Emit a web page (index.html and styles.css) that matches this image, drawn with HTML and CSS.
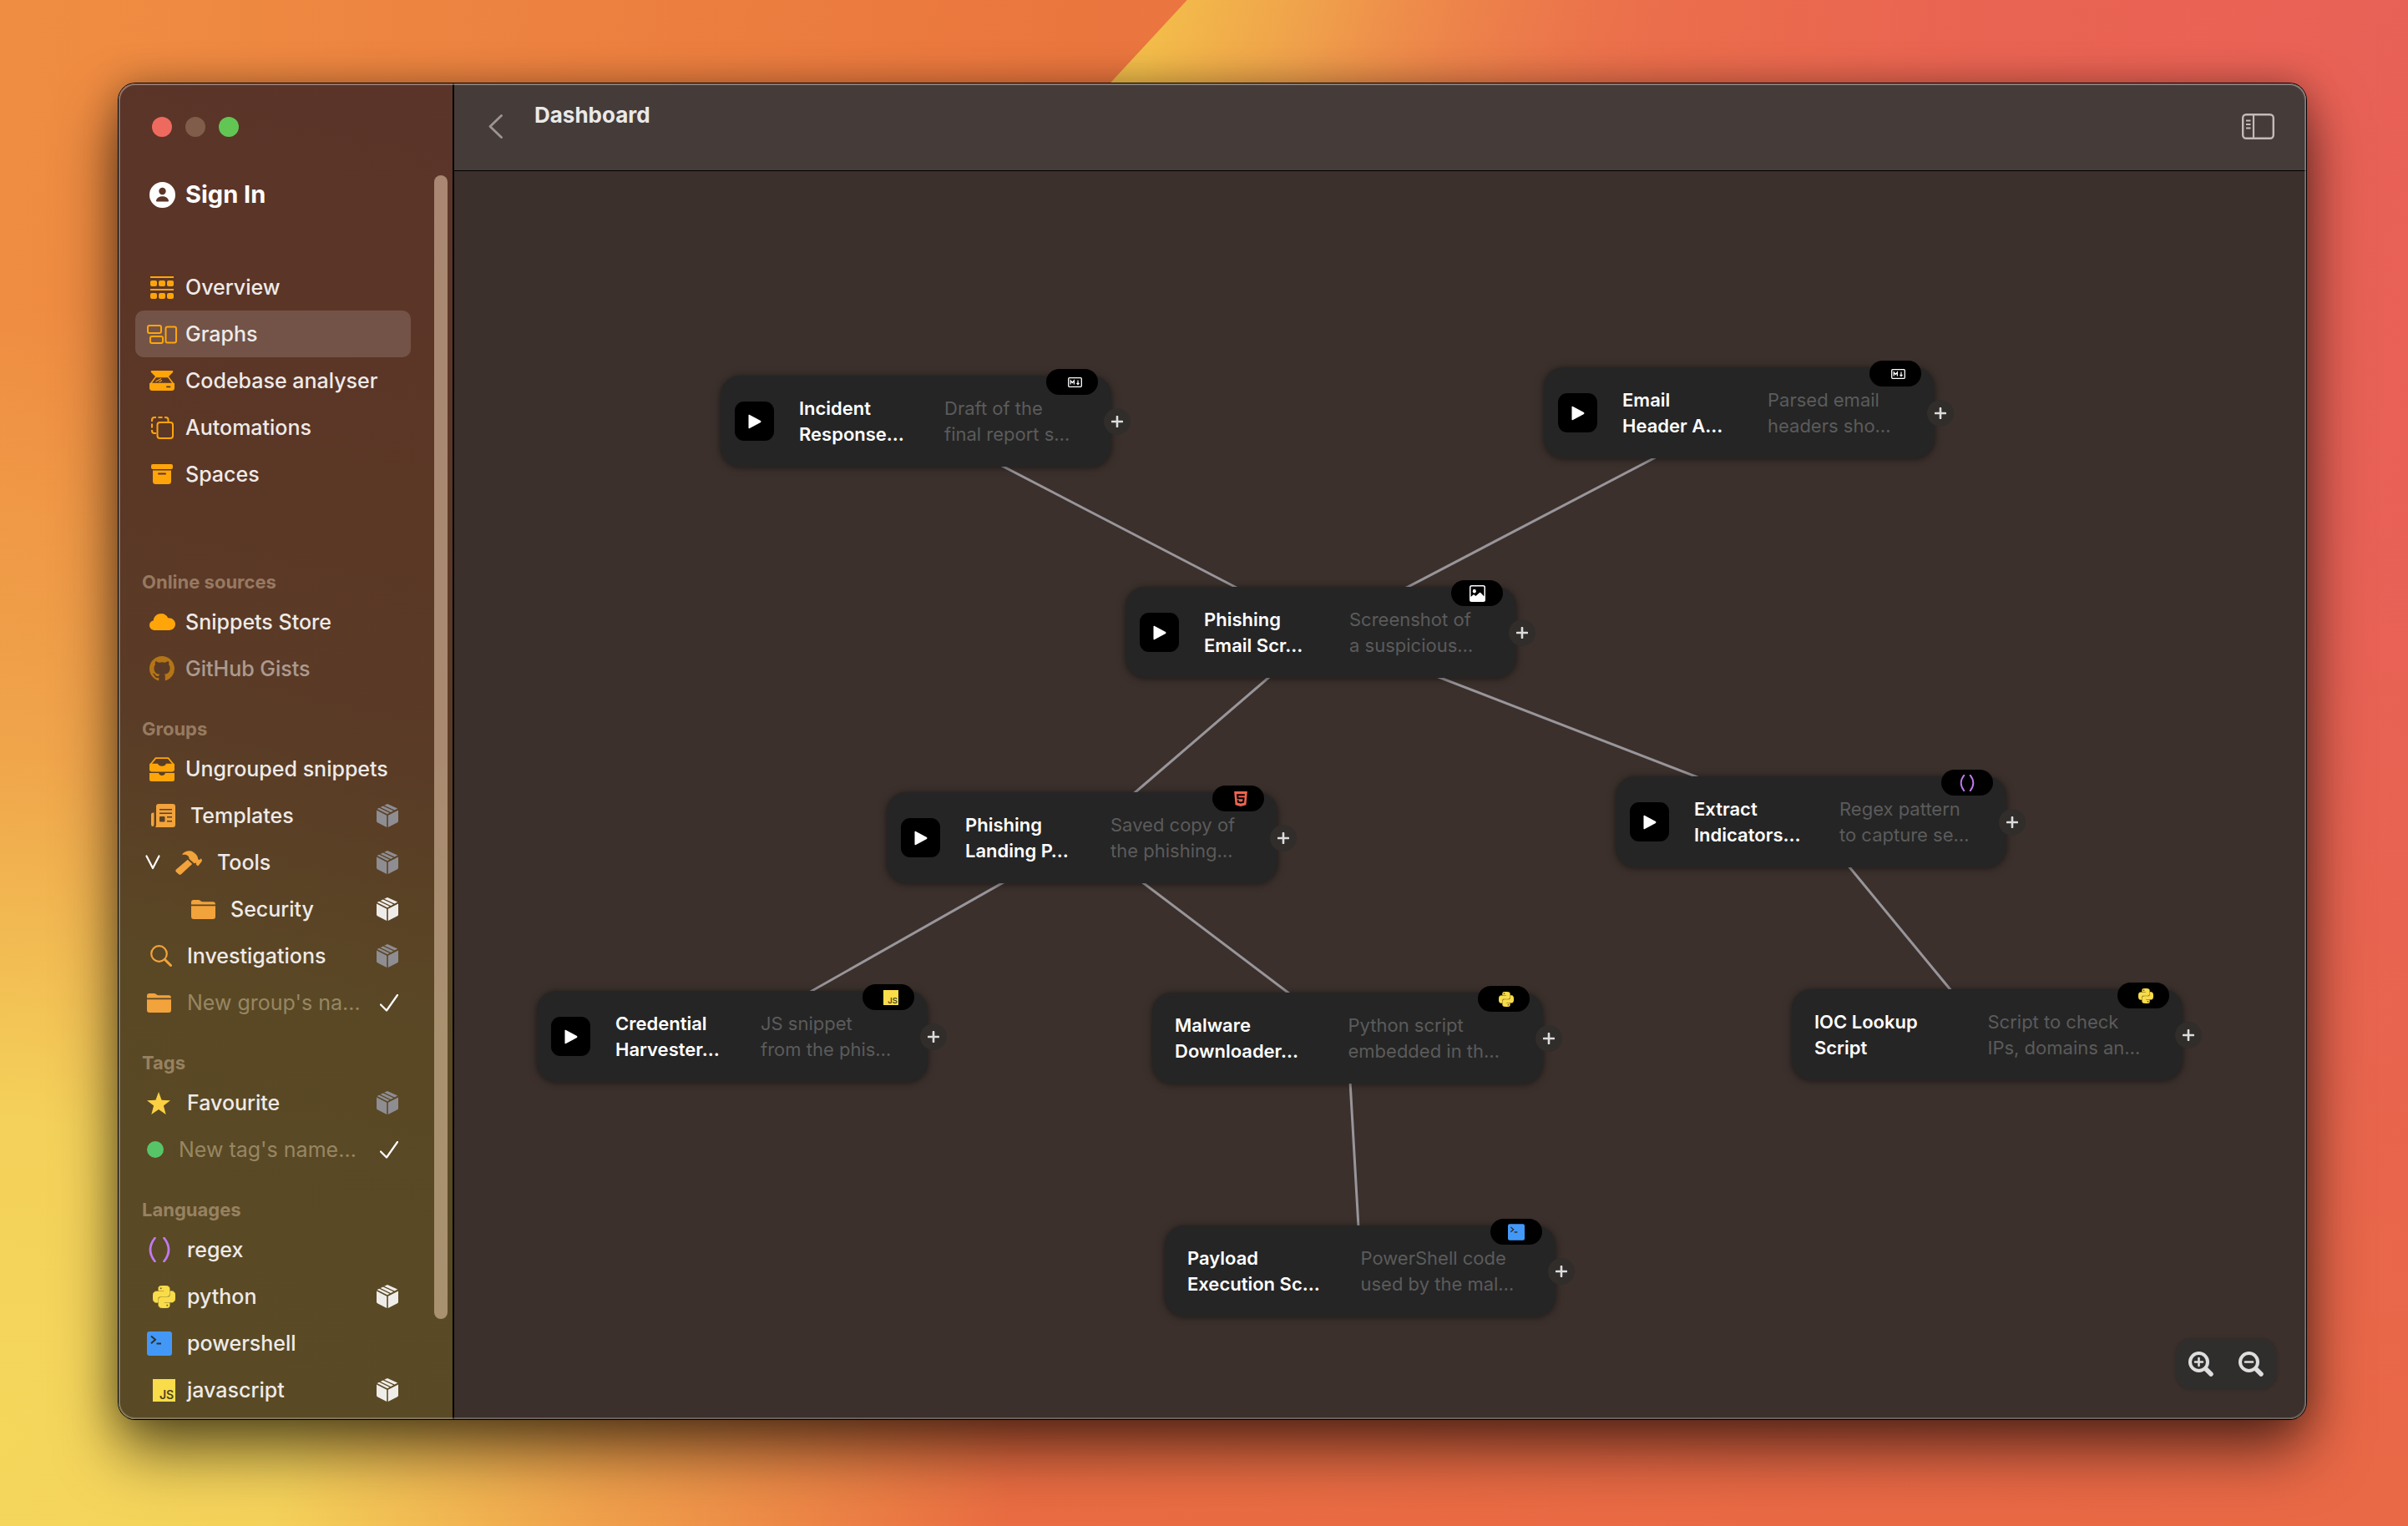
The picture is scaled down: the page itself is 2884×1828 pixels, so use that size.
FILE: index.html
```html
<!DOCTYPE html>
<html lang="en">
<head>
<meta charset="utf-8">
<meta name="viewport" content="width=device-width, initial-scale=1">
<title>Dashboard</title>
<link rel="stylesheet" href="styles.css">
</head>
<body>
<svg class="symbols" width="0" height="0" aria-hidden="true">
  <symbol id="cube" viewBox="0 0 26 28">
    <path d="M13 0L25.2 5.6 21.6 7.5 9.2 1.8Z"/><path d="M7.8 2.5L20.2 8.3 17 10 4.6 4.1Z"/><path d="M3.2 4.8L15.6 10.8 13 12.2 .6 6Z"/>
    <path d="M0 7.4L12.2 13.8V28L1 22.3Q0 21.8 0 20.6Z"/><path d="M26 7.4L13.8 13.8V28L25 22.3Q26 21.8 26 20.6Z"/>
  </symbol>
  <symbol id="check" viewBox="0 0 22 21"><path d="M1 12.5L8 19.5 21 1" fill="none" stroke="currentColor" stroke-width="2.2" stroke-linecap="round" stroke-linejoin="round"/></symbol>
  <symbol id="folder" viewBox="0 0 29 23"><path d="M0 5.6V3Q0 0 3 0H8.500Q10 0 11 1L12 1.800Q12.600 2.200 13.600 2.200H26Q29 2.200 29 5.600Z"/><path d="M0 7.200H29V20Q29 23 26 23H3Q0 23 0 20Z"/></symbol>
  <symbol id="play" viewBox="0 0 16 18"><path d="M1.500 .8L15 8Q16 9 15 10L1.500 17.200Q.5 17.600 .5 16.500V1.500Q.5 .4 1.500 .8Z"/></symbol>
  <symbol id="plus" viewBox="0 0 14 14"><path d="M7 1V13M1 7H13" fill="none" stroke="currentColor" stroke-width="2.600" stroke-linecap="round"/></symbol>
  <symbol id="parens" viewBox="0 0 26 30"><path d="M7.500 1Q-3.500 15 7.500 29M18.500 1Q29.500 15 18.500 29" fill="none" stroke="currentColor" stroke-width="2.800" stroke-linecap="round"/></symbol>
  <symbol id="python" viewBox="0 0 24 24"><path stroke="currentColor" stroke-width=".7" d="M14.25.18l.9.2.73.26.59.3.45.32.34.34.25.34.16.33.1.3.04.26.02.2-.01.13V8.500l-.05.63-.13.55-.21.46-.26.38-.3.31-.33.25-.35.19-.35.14-.33.1-.3.07-.26.04-.21.02H8.770l-.69.05-.59.14-.5.22-.41.27-.33.32-.27.35-.2.36-.15.37-.1.35-.07.32-.04.27-.02.21v3.060H3.170l-.21-.03-.28-.07-.32-.12-.35-.18-.36-.26-.36-.36-.35-.46-.32-.59-.28-.73-.21-.88-.14-1.050-.05-1.230.06-1.220.16-1.040.24-.87.32-.71.36-.57.4-.44.42-.33.42-.24.4-.16.36-.1.32-.05.24-.01h.16l.06.01h8.160v-.83H6.180l-.01-2.750-.02-.37.05-.34.11-.31.17-.28.25-.26.31-.23.38-.2.44-.18.51-.15.58-.12.64-.1.71-.06.77-.04.84-.02 1.270.05zm-6.300 1.980l-.23.33-.08.41.08.41.23.34.33.22.41.09.41-.09.33-.22.23-.34.08-.41-.08-.41-.23-.33-.33-.22-.41-.09-.41.09zm13.090 3.950l.28.06.32.12.35.18.36.27.36.35.35.47.32.59.28.73.21.88.14 1.040.05 1.230-.06 1.230-.16 1.040-.24.86-.32.71-.36.57-.4.45-.42.33-.42.24-.4.16-.36.09-.32.05-.24.02-.16-.01h-8.220v.82h5.840l.01 2.760.02.36-.05.34-.11.31-.17.29-.25.25-.31.24-.38.2-.44.17-.51.15-.58.13-.64.09-.71.07-.77.04-.84.01-1.270-.04-1.070-.14-.9-.2-.73-.25-.59-.3-.45-.33-.34-.34-.25-.34-.16-.33-.1-.3-.04-.25-.02-.2.01-.13v-5.340l.05-.64.13-.54.21-.46.26-.38.3-.32.33-.24.35-.2.35-.14.33-.1.3-.06.26-.04.21-.02.13-.01h5.840l.69-.05.59-.14.5-.21.41-.28.33-.32.27-.35.2-.36.15-.36.1-.35.07-.32.04-.28.02-.21V6.070h2.090l.14.01zm-6.470 14.250l-.23.33-.08.41.08.41.23.33.33.23.41.08.41-.08.33-.23.23-.33.08-.41-.08-.41-.23-.33-.33-.23-.41-.08-.41.08z"/></symbol>
  <symbol id="powershell" viewBox="0 0 30 29"><rect width="30" height="29" rx="3"/><path d="M5 5.500L10 9.800 5 14.200M11.500 14.500H17" fill="none" stroke="#2a3330" stroke-width="2"/></symbol>
  <symbol id="markdown" viewBox="0 0 17 12"><rect x=".7" y=".7" width="15.600" height="10.600" rx="1" fill="none" stroke="currentColor" stroke-width="1.300"/><path d="M3.200 8.500V4L5.300 6.500 7.400 4V8.500M12 3.500V8M10.500 6.800L12 8.500 13.500 6.800" fill="none" stroke="currentColor" stroke-width="1.200"/></symbol>
  <symbol id="photo" viewBox="0 0 19 20"><path fill-rule="evenodd" d="M2.500 0H16.500Q19 0 19 2.500V17.500Q19 20 16.500 20H2.500Q0 20 0 17.500V2.500Q0 0 2.500 0ZM1.500 14L4.500 11.500Q5 11 5.600 11.500L7.500 13 12 9Q12.600 8.500 13.200 9L17.500 13.500V2.700Q17.500 1.500 16.300 1.500H2.700Q1.500 1.500 1.500 2.700Z"/><ellipse cx="5.800" cy="7.200" rx="2" ry="2.400"/></symbol>
  <symbol id="html5" viewBox="0 0 24 24"><path d="M1.500 0h21l-1.910 21.563L11.977 24l-8.564-2.438L1.500 0zm7.031 9.750l-.232-2.718 10.059.003.23-2.622L5.412 4.410l.698 8.010h9.126l-.326 3.426-2.910.804-2.955-.81-.188-2.110H6.248l.33 4.171L12 19.351l5.379-1.443.744-8.157H8.531z"/></symbol>
</svg>

<svg class="wallpaper" viewBox="0 0 1568 994" preserveAspectRatio="none" aria-hidden="true">
  <defs>
    <linearGradient id="wave" gradientUnits="userSpaceOnUse" x1="748" y1="27" x2="1060" y2="120">
      <stop offset="0" stop-color="#f3bd4a"/><stop offset=".3" stop-color="#f0a54c" stop-opacity=".9"/><stop offset="1" stop-color="#ec7850" stop-opacity="0"/>
    </linearGradient>
  </defs>
  <path d="M773 0H1200V400H403Z" fill="url(#wave)"/>
</svg>

<div class="window">
  <aside class="sidebar">
    <div class="lights">
      <button class="light close" aria-label="Close"></button>
      <button class="light minimise" aria-label="Minimise"></button>
      <button class="light zoom" aria-label="Zoom"></button>
    </div>

    <a class="row account" href="#">
      <span class="slot"><svg width="31" height="31" viewBox="0 0 31 31"><path fill-rule="evenodd" d="M15.500 0A15.500 15.500 0 1 1 15.500 31 15.500 15.500 0 1 1 15.500 0ZM15.500 6.800A4.200 4.200 0 1 0 15.500 15.200 4.200 4.200 0 1 0 15.500 6.800ZM8 22.500Q8 23.500 9 23.500H22Q23 23.500 23 22.500C22 15.600 9 15.600 8 22.500Z"/></svg></span>Sign In
    </a>

    <nav class="menu">
      <a class="row" href="#"><span class="slot"><svg width="28" height="27" viewBox="0 0 28 27"><path d="M0 0H28V2H0ZM0 15H28V17H0Z"/><rect y="5" width="8" height="7" rx="2"/><rect x="10" y="5" width="8" height="7" rx="2"/><rect x="20" y="5" width="8" height="7" rx="2"/><rect y="20" width="8" height="7" rx="2"/><rect x="10" y="20" width="8" height="7" rx="2"/><rect x="20" y="20" width="8" height="7" rx="2"/></svg></span>Overview</a>
      <a class="row selected" href="#" aria-current="page"><span class="slot"><svg width="36" height="23" viewBox="0 0 36 23"><g fill="none" stroke="currentColor" stroke-width="2"><rect x="1" y="1" width="16" height="9" rx="2"/><rect x="4" y="14" width="15" height="8" rx="2"/><rect x="22.500" y="2.500" width="12.500" height="19" rx="2"/></g></svg></span>Graphs</a>
      <a class="row" href="#"><span class="slot"><svg width="30" height="24" viewBox="0 0 30 24"><path d="M2.500 0H27.500Q29 .5 28 2L23 7H7L2 2Q1 .5 2.500 0Z"/><path d="M7.500 7.500H22.500L28.500 15.500H1.500Z" fill="none" stroke="currentColor" stroke-width="1.600"/><path d="M7.500 13L14 9.500M11.500 13.500L15 11.500" fill="none" stroke="currentColor" stroke-width="1.200"/><path fill-rule="evenodd" d="M0 15H30V20.500Q30 24 26.500 24H3.500Q0 24 0 20.500ZM21 18.600Q20 18.600 20 19.500 20 20.300 21 20.300H24.500Q25.500 20.300 25.500 19.500 25.500 18.600 24.500 18.600Z"/></svg></span>Codebase analyser</a>
      <a class="row" href="#"><span class="slot"><svg width="27" height="27" viewBox="0 0 27 27"><g fill="none" stroke="currentColor" stroke-width="2"><rect x="7.500" y="7" width="18.500" height="19" rx="3"/><path d="M1 6V4Q1 1 4 1H6M8.500 1H13.500M16 1H17.500Q20.500 1 20.500 4V6M1 8.500V13.500M1 16V17Q1 20 4 20H6"/></g></svg></span>Automations</a>
      <a class="row" href="#"><span class="slot"><svg width="26" height="24" viewBox="0 0 26 24"><rect width="26" height="6" rx="2"/><path fill-rule="evenodd" d="M2 7.500H24V20.500Q24 24 20.500 24H5.500Q2 24 2 20.500ZM9 10.500Q8 10.500 8 11.500T9 12.500H17Q18 12.500 18 11.500T17 10.500Z"/></svg></span>Spaces</a>
    </nav>

    <section class="group group-first">
      <h2>Online sources</h2>
      <a class="row" href="#"><span class="slot"><svg width="31" height="20" viewBox="0 0 31 20"><path d="M7 20C2.500 20 0 17.300 0 14 0 11 2 8.800 4.800 8.300 5 3.500 9.500 0 14 0 18 0 20.800 2 22.200 5.200 27 4.700 31 8.200 31 12.600 31 17 27.800 20 23.500 20Z"/></svg></span>Snippets Store</a>
      <a class="row dim" href="#"><span class="slot"><svg width="30" height="30" viewBox="0 0 16 16"><path d="M8 0C3.580 0 0 3.580 0 8c0 3.540 2.290 6.530 5.470 7.590.4.07.55-.17.55-.38 0-.19-.01-.82-.01-1.490-2.010.37-2.530-.49-2.690-.94-.09-.23-.48-.94-.82-1.130-.28-.15-.68-.52-.01-.53.63-.01 1.080.58 1.230.82.72 1.210 1.870.87 2.330.66.07-.52.28-.87.51-1.070-1.780-.2-3.640-.89-3.640-3.950 0-.87.31-1.590.82-2.150-.08-.2-.36-1.020.08-2.120 0 0 .67-.21 2.200.82.64-.18 1.320-.27 2-.27.68 0 1.360.09 2 .27 1.530-1.040 2.200-.82 2.200-.82.44 1.100.16 1.920.08 2.120.51.56.82 1.270.82 2.150 0 3.070-1.870 3.750-3.650 3.950.29.25.54.73.54 1.480 0 1.070-.01 1.930-.01 2.200 0 .21.15.46.55.38A8.013 8.013 0 0016 8c0-4.420-3.580-8-8-8z"/></svg></span>GitHub Gists</a>
    </section>

    <section class="group">
      <h2>Groups</h2>
      <a class="row" href="#"><span class="slot"><svg width="30" height="29" viewBox="0 0 30 29"><path d="M1 9L7.500 1.200H22.500L29 9" fill="none" stroke="currentColor" stroke-width="1.800"/><path d="M.5 7.800H10Q11 10.800 15 10.800T20 7.800H29.500Q30 8.500 30 9.500V15Q30 17.400 27.500 17.400H2.500Q0 17.400 0 15V9.500Q0 8.500 .5 7.800ZM0 19H11Q12 22 15 22T19 19H30V26.500Q30 29 27.500 29H2.500Q0 29 0 26.500Z"/></svg></span>Ungrouped snippets</a>
      <a class="row amber wide" href="#"><span class="slot end"><svg width="29" height="28" viewBox="0 0 29 28"><path fill-rule="evenodd" d="M9 0H26Q29 0 29 3V25Q29 28 26 28H5Q6 27 6 25V3Q6 0 9 0ZM10 6H25V7.500H10ZM10 10.500H25V12H10ZM19 15H25V16.500H19ZM19 20H25V21.500H19ZM11 15H15.500Q16.500 15 16.500 16V20.500Q16.500 21.500 15.500 21.500H11Q10 21.500 10 20.500V16Q10 15 11 15Z"/><path d="M0 12.500Q0 10.500 2.500 10.500H3.500V24.500Q3.500 27 1.800 27T0 24.500Z"/></svg></span><span class="name">Templates</span><svg class="cube" width="26" height="28"><use href="#cube"/></svg></a>
      <a class="row amber wide parent" href="#"><svg class="twist" width="18" height="18" viewBox="0 0 18 18"><path d="M1.500 1.500L9 16 16.500 1.500" fill="none" stroke="currentColor" stroke-width="2.200" stroke-linecap="round" stroke-linejoin="round"/></svg><svg class="hammer" width="32" height="29" viewBox="0 0 32 29"><path d="M14.800 10.800L20.200 16 7 28.200Q5.500 29.500 4 28.200L1 25.400Q-.4 24 1 22.600Z"/><path d="M8.500 4C12 0 17.500 -.8 21.500 1.800 25.500 4.300 27 7.300 27.300 10.400L29 10.900 30.300 9.700Q31 9.300 31.400 10L31.900 11.800Q32 12.500 31.600 13L27.600 17.900Q27 18.500 26.400 18L24.800 16.400 25 14.600 22.500 15.200 16.500 9.800C16.800 6 13 4.200 9 4.900Q8 4.900 8.500 4Z"/></svg><span class="name">Tools</span><svg class="cube" width="26" height="28"><use href="#cube"/></svg></a>
      <a class="row amber wide child" href="#"><svg width="29" height="23"><use href="#folder"/></svg><span class="name">Security</span><svg class="cube on" width="26" height="28"><use href="#cube"/></svg></a>
      <a class="row amber named" href="#"><span class="slot"><svg width="26" height="26" viewBox="0 0 26 26"><circle cx="10.500" cy="10.500" r="9.300" fill="none" stroke="currentColor" stroke-width="2.200"/><path d="M17.500 17.500L24.500 24.500" stroke="currentColor" stroke-width="3" stroke-linecap="round"/></svg></span><span class="name">Investigations</span><svg class="cube" width="26" height="28"><use href="#cube"/></svg></a>
      <div class="row amber named"><span class="slot start"><svg width="29" height="23"><use href="#folder"/></svg></span><input class="name" type="text" aria-label="New group's name" placeholder="New group's na…"><button class="add" aria-label="Add group"><svg width="22" height="21"><use href="#check"/></svg></button></div>
    </section>

    <section class="group">
      <h2>Tags</h2>
      <a class="row named star" href="#"><span class="slot start"><svg width="28" height="27" viewBox="0 0 28 27"><path d="M14 0L17.600 9.700 28 10.200 19.900 16.600 22.700 27 14 21 5.300 27 8.100 16.600 0 10.200 10.400 9.700Z"/></svg></span><span class="name">Favourite</span><svg class="cube" width="26" height="28"><use href="#cube"/></svg></a>
      <div class="row wide"><span class="dot"></span><input class="name" type="text" aria-label="New tag's name" placeholder="New tag's name…"><button class="add" aria-label="Add tag"><svg width="22" height="21"><use href="#check"/></svg></button></div>
    </section>

    <section class="group">
      <h2>Languages</h2>
      <a class="row named violet" href="#"><span class="slot start"><svg width="30" height="30"><use href="#parens"/></svg></span><span class="name">regex</span></a>
      <a class="row named yellow" href="#"><span class="slot end"><svg width="27" height="27"><use href="#python"/></svg></span><span class="name">python</span><svg class="cube on" width="26" height="28"><use href="#cube"/></svg></a>
      <a class="row named blue" href="#"><span class="slot start"><svg width="30" height="29"><use href="#powershell"/></svg></span><span class="name">powershell</span></a>
      <a class="row named yellow" href="#"><span class="slot end"><svg width="27" height="27" viewBox="0 0 27 27"><rect width="27" height="27"/><text class="js-mark" x="8" y="24">JS</text></svg></span><span class="name">javascript</span><svg class="cube on" width="26" height="28"><use href="#cube"/></svg></a>
    </section>
    <div class="scrollbar"></div>
  </aside>

  <main class="main">
    <header class="toolbar">
      <button class="tool back" aria-label="Back"><svg width="17" height="29" viewBox="0 0 17 29"><path d="M15.500 1.500L2 14.500 15.500 27.500" fill="none" stroke="currentColor" stroke-width="2.800" stroke-linecap="round" stroke-linejoin="round"/></svg></button>
      <h1>Dashboard</h1>
      <button class="tool panel" aria-label="Toggle sidebar"><svg width="39" height="31" viewBox="0 0 39 31"><g fill="none" stroke="currentColor"><rect x="1.200" y="1.200" width="36.600" height="28.600" rx="4" stroke-width="2.400"/><path d="M14 1V30" stroke-width="2.200"/><path d="M5 8.500H10.500M5 13H10.500M5 17.500H10.500" stroke-width="2"/></g></svg></button>
    </header>

    <div class="canvas">
      <svg class="edges" aria-hidden="true">
        <path d="M554 300L1039 552L1540 290M1039 552L753 798L333 1036M753 798L1070 1038L1086 1317M1039 552L1626 779L1836 1034"/>
      </svg>

      <article class="node incident"><button class="run" aria-label="Run"><svg width="16" height="18"><use href="#play"/></svg></button><h3>Incident<br>Response…</h3><p>Draft of the<br>final report s…</p><span class="badge shifted"><svg width="17" height="12"><use href="#markdown"/></svg></span><button class="link" aria-label="Connect"><svg width="14" height="14"><use href="#plus"/></svg></button></article>

      <article class="node header"><button class="run" aria-label="Run"><svg width="16" height="18"><use href="#play"/></svg></button><h3>Email<br>Header A…</h3><p>Parsed email<br>headers sho…</p><span class="badge shifted"><svg width="17" height="12"><use href="#markdown"/></svg></span><button class="link" aria-label="Connect"><svg width="14" height="14"><use href="#plus"/></svg></button></article>

      <article class="node screenshot"><button class="run" aria-label="Run"><svg width="16" height="18"><use href="#play"/></svg></button><h3>Phishing<br>Email Scr…</h3><p>Screenshot of<br>a suspicious…</p><span class="badge"><svg width="19" height="20"><use href="#photo"/></svg></span><button class="link" aria-label="Connect"><svg width="14" height="14"><use href="#plus"/></svg></button></article>

      <article class="node landing"><button class="run" aria-label="Run"><svg width="16" height="18"><use href="#play"/></svg></button><h3>Phishing<br>Landing P…</h3><p>Saved copy of<br>the phishing…</p><span class="badge shifted red"><svg width="18" height="18"><use href="#html5"/></svg></span><button class="link" aria-label="Connect"><svg width="14" height="14"><use href="#plus"/></svg></button></article>

      <article class="node extract"><button class="run" aria-label="Run"><svg width="16" height="18"><use href="#play"/></svg></button><h3>Extract<br>Indicators…</h3><p>Regex pattern<br>to capture se…</p><span class="badge violet"><svg width="20" height="20"><use href="#parens"/></svg></span><button class="link" aria-label="Connect"><svg width="14" height="14"><use href="#plus"/></svg></button></article>

      <article class="node credential"><button class="run" aria-label="Run"><svg width="16" height="18"><use href="#play"/></svg></button><h3>Credential<br>Harvester…</h3><p>JS snippet<br>from the phis…</p><span class="badge shifted yellow"><svg width="18" height="18" viewBox="0 0 27 27"><rect width="27" height="27"/><text class="js-mark" x="8" y="24">JS</text></svg></span><button class="link" aria-label="Connect"><svg width="14" height="14"><use href="#plus"/></svg></button></article>

      <article class="node plain malware"><h3>Malware<br>Downloader…</h3><p>Python script<br>embedded in th…</p><span class="badge shifted yellow"><svg width="18" height="18"><use href="#python"/></svg></span><button class="link" aria-label="Connect"><svg width="14" height="14"><use href="#plus"/></svg></button></article>

      <article class="node plain lookup"><h3>IOC Lookup<br>Script</h3><p>Script to check<br>IPs, domains an…</p><span class="badge shifted yellow"><svg width="18" height="18"><use href="#python"/></svg></span><button class="link" aria-label="Connect"><svg width="14" height="14"><use href="#plus"/></svg></button></article>

      <article class="node plain payload"><h3>Payload<br>Execution Sc…</h3><p>PowerShell code<br>used by the mal…</p><span class="badge blue"><svg width="20" height="20"><use href="#powershell"/></svg></span><button class="link" aria-label="Connect"><svg width="14" height="14"><use href="#plus"/></svg></button></article>

      <div class="magnify">
        <button class="tool" aria-label="Zoom in"><svg width="30" height="30" viewBox="0 0 30 30"><g fill="none" stroke="currentColor" stroke-linecap="round"><circle cx="12.500" cy="12.500" r="10.500" stroke-width="4"/><path d="M21 21L27 27" stroke-width="5.500"/><path d="M12.500 8V17M8 12.500H17" stroke-width="2.600"/></g></svg></button>
        <button class="tool" aria-label="Zoom out"><svg width="30" height="30" viewBox="0 0 30 30"><g fill="none" stroke="currentColor" stroke-linecap="round"><circle cx="12.500" cy="12.500" r="10.500" stroke-width="4"/><path d="M21 21L27 27" stroke-width="5.500"/><path d="M8 12.500H17" stroke-width="2.600"/></g></svg></button>
      </div>
    </div>
  </main>
</div>
</body>
</html>
```
FILE: styles.css
```css
* { box-sizing: border-box; }

body {
  margin: 0;
  min-height: 100vh;
  padding: 100px 122px 128px 142px;
  display: flex;
  font: 500 25px/32px Inter, "Liberation Sans", sans-serif;
  color: #efeae7;
  background:
    radial-gradient(ellipse 42% 74% at 0 94%, #f5d75c 0, #f4d15a 28%, rgba(241, 176, 78, .75) 60%, rgba(238, 140, 68, 0) 100%),
    linear-gradient(rgba(233, 110, 64, 0) 35%, rgba(233, 106, 66, .85) 100%),
    linear-gradient(97deg, #ef8e42 0, #ea763e 42%, #eb7248 58%, #ea6452 76%, #e86058 100%);
}

a { color: inherit; text-decoration: none; }
button { margin: 0; padding: 0; border: 0; background: none; color: inherit; font: inherit; }
svg { display: block; flex: none; fill: currentColor; }
h1, h2, h3, p { margin: 0; }

.symbols { position: absolute; }
.js-mark { fill: #4a431f; font: 600 14px Inter, sans-serif; }

.wallpaper {
  position: absolute;
  inset: 0;
  z-index: -1;
  width: 100%;
  height: 100%;
}

/* Window */
.window {
  position: relative;
  flex: 1;
  display: flex;
  border-radius: 20px;
  box-shadow:
    0 0 0 1px #000,
    0 0 40px rgba(0, 0, 0, .25),
    0 36px 72px rgba(0, 0, 0, .6);
}
.window::after {
  content: "";
  position: absolute;
  inset: 0;
  border-radius: inherit;
  box-shadow: inset 0 0 0 2px rgba(255, 255, 255, .24), inset 0 1px 0 1px rgba(255, 255, 255, .12);
  pointer-events: none;
}

/* Sidebar */
.sidebar {
  position: relative;
  flex: none;
  width: 402px;
  padding: 40px 50px 7px 20px;
  border-right: 2px solid #000;
  border-radius: 20px 0 0 20px;
  background: linear-gradient(192deg, #5b3429 0, #5b3726 30%, #5a3b26 48%, #5a4825 68%, #594a25 100%);
}
.lights { display: flex; gap: 16px; margin: 0 0 41px 20px; }
.light { width: 24px; height: 24px; border-radius: 50%; }
.close { background: #ee6a5f; }
.minimise { background: #805c4a; }
.zoom { background: #62c654; }

.row {
  display: flex;
  align-items: center;
  gap: 10px;
  height: 56px;
  padding: 0 15px 0 14px;
  border-radius: 10px;
}
.row svg { color: #ffa50a; }
.slot { flex: none; display: flex; justify-content: center; width: 36px; }
.account { font-size: 29px; font-weight: 700; color: #fff; margin-bottom: 55px; }
.row.account svg { color: #fff; }
.selected { background: rgba(255, 255, 255, .15); }
.dim { opacity: .55; }

.group { margin-top: 24px; }
.group-first { margin-top: 81px; }
.group h2 {
  padding-left: 8px;
  font-size: 22px;
  font-weight: 700;
  line-height: 40px;
  color: rgba(240, 215, 185, .42);
}

.named { gap: 14px; }
.named .slot, .wide .slot { width: 34px; }
.wide { gap: 18px; }
.slot.start { justify-content: flex-start; }
.slot.end { justify-content: flex-end; }
.parent { padding-left: 12px; }
.child { padding-left: 67px; }
.name { flex: 1; min-width: 0; }
.row.amber svg { color: #f2a33c; }
.row.star svg { color: #fbd042; }
.row.violet svg, .badge.violet { color: #c07af0; }
.row.yellow svg, .badge.yellow { color: #f9dc4a; }
.row.blue svg, .badge.blue { color: #4398f7; }
.badge.red { color: #ee6350; }
.row svg.cube { color: #8e8d92; }
.row svg.cube.on { color: #efede9; }
.row svg.twist, .row .add svg { color: #fff; }
.dot { flex: none; width: 20px; height: 20px; border-radius: 50%; background: #57c567; }

input.name {
  margin: 0;
  padding: 0;
  border: 0;
  outline: 0;
  background: none;
  font: inherit;
  font-weight: 400;
  color: inherit;
}
input.name::placeholder { color: rgba(240, 225, 190, .42); opacity: 1; }
.add { flex: none; }

.scrollbar {
  position: absolute;
  top: 110px;
  right: 6px;
  bottom: 120px;
  width: 16px;
  border-radius: 8px;
  background: rgba(247, 218, 188, .5);
}

/* Main pane */
.main {
  flex: 1;
  min-width: 0;
  display: flex;
  flex-direction: column;
  border-radius: 0 20px 20px 0;
  overflow: hidden;
}
.toolbar {
  display: flex;
  align-items: center;
  height: 105px;
  padding: 0 38px 2px 41px;
  border-bottom: 1px solid #000;
  background: #453c3a;
}
.toolbar h1 {
  margin-left: 38px;
  padding-bottom: 26px;
  font-size: 26px;
  font-weight: 700;
  line-height: 28px;
  color: #ebe9e8;
}
.back { color: #9b9593; }
.panel { margin-left: auto; color: #c4bbb8; }

.canvas { position: relative; flex: 1; background: #3b302c; overflow: hidden; }
.edges { position: absolute; inset: 0; width: 100%; height: 100%; }
.edges path { fill: none; stroke: #98969b; stroke-width: 3; }

.node {
  position: absolute;
  display: flex;
  align-items: center;
  gap: 22px;
  width: 468px;
  height: 109px;
  padding: 0 48px 0 17px;
  border-radius: 24px;
  background: #252525;
  box-shadow: 0 1px 10px rgba(0, 0, 0, .5);
  font-size: 22px;
  line-height: 31px;
  white-space: nowrap;
}
.plain { padding-left: 27px; }
.node h3, .node p { flex: 1 1 0; min-width: 0; font-size: 22px; }
.node h3 { font-weight: 600; color: #fff; }
.node p { font-weight: 400; color: #5b5b5b; }
.run {
  flex: none;
  display: grid;
  place-items: center;
  width: 47px;
  height: 47px;
  margin-right: 8px;
  border-radius: 11px;
  background: #000;
  color: #fff;
}
.badge {
  position: absolute;
  top: -8px;
  right: 16px;
  display: grid;
  place-items: center;
  width: 62px;
  height: 31px;
  border-radius: 16px;
  background: #000;
  color: #fff;
}
.shifted { padding-left: 6px; }
.link {
  position: absolute;
  top: 39px;
  right: -23px;
  display: grid;
  place-items: center;
  width: 32px;
  height: 32px;
  border-radius: 50%;
  background: #312d2b;
  color: #dcdcdc;
}

.incident { left: 319px; top: 245px; }
.header { left: 1305px; top: 235px; }
.screenshot { left: 804px; top: 498px; }
.landing { left: 518px; top: 744px; }
.extract { left: 1391px; top: 725px; }
.credential { left: 99px; top: 982px; }
.malware { left: 836px; top: 984px; }
.lookup { left: 1602px; top: 980px; }
.payload { left: 851px; top: 1263px; }

.magnify {
  position: absolute;
  right: 36px;
  bottom: 36px;
  display: flex;
  gap: 30px;
  padding: 15px;
  border-radius: 18px;
  background: #302e2c;
  box-shadow: 0 0 4px rgba(0, 0, 0, .25);
  color: #dedede;
}
```
